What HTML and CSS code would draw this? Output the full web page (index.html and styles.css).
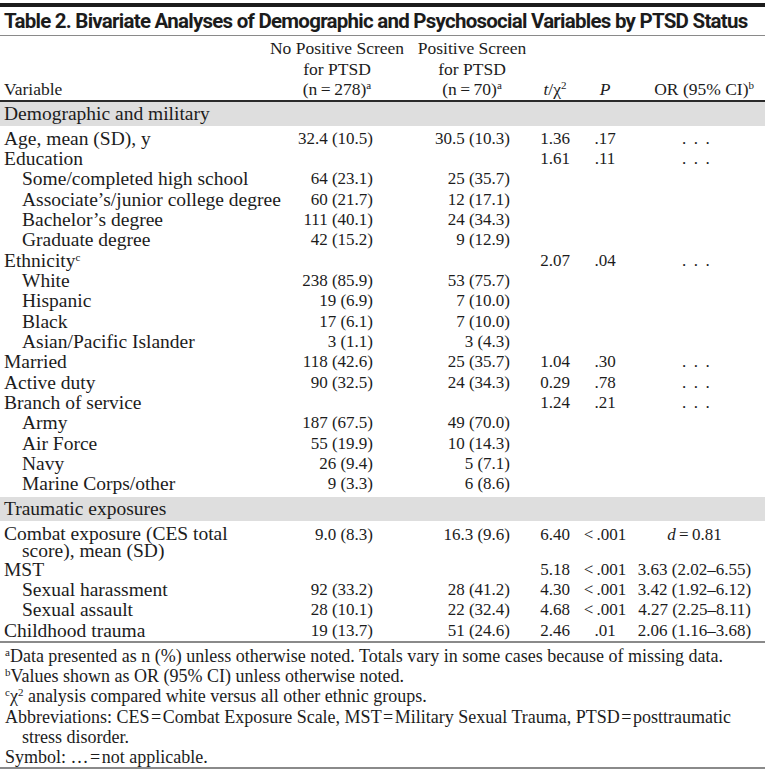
FILE: index.html
```html
<!DOCTYPE html>
<html lang="en">
<head>
<meta charset="utf-8">
<title>Table 2</title>
<link rel="stylesheet" href="styles.css">
</head>
<body>
<div class="page">
  <div class="topbar"></div>
  <h1 class="title">Table 2. Bivariate Analyses of Demographic and Psychosocial Variables by PTSD Status</h1>
  <table class="tbl">
    <colgroup>
      <col class="c-var"><col class="c-neg"><col class="c-pos"><col class="c-t"><col class="c-p"><col class="c-or">
    </colgroup>
    <thead>
      <tr>
        <th class="h-var">Variable</th>
        <th class="h-grp">No Positive Screen<br>for PTSD<br>(n&#8201;=&#8201;278)<sup>a</sup></th>
        <th class="h-grp">Positive Screen<br>for PTSD<br>(n&#8201;=&#8201;70)<sup>a</sup></th>
        <th class="h-t"><i>t</i>/χ<sup>2</sup></th>
        <th class="h-p"><i>P</i></th>
        <th class="h-or">OR (95% CI)<sup>b</sup></th>
      </tr>
    </thead>
    <tbody>
      <tr class="section"><td colspan="6">Demographic and military</td></tr>
      <tr class="first"><td class="lab">Age, mean (SD), y</td><td class="neg">32.4 (10.5)</td><td class="pos">30.5 (10.3)</td><td class="t">1.36</td><td class="p">.17</td><td class="or"><span class="ell">...</span></td></tr>
      <tr><td class="lab">Education</td><td class="neg"></td><td class="pos"></td><td class="t">1.61</td><td class="p">.11</td><td class="or"><span class="ell">...</span></td></tr>
      <tr><td class="lab sub">Some/completed high school</td><td class="neg">64 (23.1)</td><td class="pos">25 (35.7)</td><td class="t"></td><td class="p"></td><td class="or"></td></tr>
      <tr><td class="lab sub">Associate’s/junior college degree</td><td class="neg">60 (21.7)</td><td class="pos">12 (17.1)</td><td class="t"></td><td class="p"></td><td class="or"></td></tr>
      <tr><td class="lab sub">Bachelor’s degree</td><td class="neg">111 (40.1)</td><td class="pos">24 (34.3)</td><td class="t"></td><td class="p"></td><td class="or"></td></tr>
      <tr><td class="lab sub">Graduate degree</td><td class="neg">42 (15.2)</td><td class="pos">9 (12.9)</td><td class="t"></td><td class="p"></td><td class="or"></td></tr>
      <tr><td class="lab">Ethnicity<sup>c</sup></td><td class="neg"></td><td class="pos"></td><td class="t">2.07</td><td class="p">.04</td><td class="or"><span class="ell">...</span></td></tr>
      <tr><td class="lab sub">White</td><td class="neg">238 (85.9)</td><td class="pos">53 (75.7)</td><td class="t"></td><td class="p"></td><td class="or"></td></tr>
      <tr><td class="lab sub">Hispanic</td><td class="neg">19 (6.9)</td><td class="pos">7 (10.0)</td><td class="t"></td><td class="p"></td><td class="or"></td></tr>
      <tr><td class="lab sub">Black</td><td class="neg">17 (6.1)</td><td class="pos">7 (10.0)</td><td class="t"></td><td class="p"></td><td class="or"></td></tr>
      <tr><td class="lab sub">Asian/Pacific Islander</td><td class="neg">3 (1.1)</td><td class="pos">3 (4.3)</td><td class="t"></td><td class="p"></td><td class="or"></td></tr>
      <tr><td class="lab">Married</td><td class="neg">118 (42.6)</td><td class="pos">25 (35.7)</td><td class="t">1.04</td><td class="p">.30</td><td class="or"><span class="ell">...</span></td></tr>
      <tr><td class="lab">Active duty</td><td class="neg">90 (32.5)</td><td class="pos">24 (34.3)</td><td class="t">0.29</td><td class="p">.78</td><td class="or"><span class="ell">...</span></td></tr>
      <tr><td class="lab">Branch of service</td><td class="neg"></td><td class="pos"></td><td class="t">1.24</td><td class="p">.21</td><td class="or"><span class="ell">...</span></td></tr>
      <tr><td class="lab sub">Army</td><td class="neg">187 (67.5)</td><td class="pos">49 (70.0)</td><td class="t"></td><td class="p"></td><td class="or"></td></tr>
      <tr><td class="lab sub">Air Force</td><td class="neg">55 (19.9)</td><td class="pos">10 (14.3)</td><td class="t"></td><td class="p"></td><td class="or"></td></tr>
      <tr><td class="lab sub">Navy</td><td class="neg">26 (9.4)</td><td class="pos">5 (7.1)</td><td class="t"></td><td class="p"></td><td class="or"></td></tr>
      <tr class="last"><td class="lab sub">Marine Corps/other</td><td class="neg">9 (3.3)</td><td class="pos">6 (8.6)</td><td class="t"></td><td class="p"></td><td class="or"></td></tr>
      <tr class="section"><td colspan="6">Traumatic exposures</td></tr>
      <tr class="first-wrap"><td class="lab wrap">Combat exposure (CES total<br>score), mean (SD)</td><td class="neg">9.0 (8.3)</td><td class="pos">16.3 (9.6)</td><td class="t">6.40</td><td class="p">&lt;&#8201;.001</td><td class="or"><i>d</i>&#8201;=&#8201;0.81</td></tr>
      <tr><td class="lab">MST</td><td class="neg"></td><td class="pos"></td><td class="t">5.18</td><td class="p">&lt;&#8201;.001</td><td class="or">3.63 (2.02–6.55)</td></tr>
      <tr><td class="lab sub">Sexual harassment</td><td class="neg">92 (33.2)</td><td class="pos">28 (41.2)</td><td class="t">4.30</td><td class="p">&lt;&#8201;.001</td><td class="or">3.42 (1.92–6.12)</td></tr>
      <tr><td class="lab sub">Sexual assault</td><td class="neg">28 (10.1)</td><td class="pos">22 (32.4)</td><td class="t">4.68</td><td class="p">&lt;&#8201;.001</td><td class="or">4.27 (2.25–8.11)</td></tr>
      <tr class="end"><td class="lab">Childhood trauma</td><td class="neg">19 (13.7)</td><td class="pos">51 (24.6)</td><td class="t">2.46</td><td class="p">.01</td><td class="or">2.06 (1.16–3.68)</td></tr>
    </tbody>
  </table>
  <div class="notes">
    <p><sup>a</sup>Data presented as n (%) unless otherwise noted. Totals vary in some cases because of missing data.</p>
    <p><sup>b</sup>Values shown as OR (95% CI) unless otherwise noted.</p>
    <p><sup>c</sup>χ<sup>2</sup> analysis compared white versus all other ethnic groups.</p>
    <p class="hang">Abbreviations: CES&#8202;=&#8202;Combat Exposure Scale, MST&#8202;=&#8202;Military Sexual Trauma, PTSD&#8202;=&#8202;posttraumatic<br>stress disorder.</p>
    <p>Symbol: …&#8202;=&#8202;not applicable.</p>
  </div>
</div>
</body>
</html>
```

FILE: styles.css
```css
html, body {
  margin: 0;
  padding: 0;
  background: #ffffff;
}

body {
  color: #1c1c1c;
  font-family: "Liberation Serif", "Times New Roman", serif;
}

.page {
  width: 765px;
  padding-top: 3px;
}

.topbar {
  height: 4px;
  background: #1c1c1c;
}

.title {
  margin: 0;
  padding: 3px 0 0 4px;
  height: 25px;
  line-height: 23px;
  font-family: "Roboto", "Liberation Sans", sans-serif;
  font-weight: bold;
  font-size: 20.5px;
  letter-spacing: -0.75px;
  color: #1c1c1c;
  white-space: nowrap;
  border-bottom: 1px solid #8a8a8a;
}

.tbl {
  width: 765px;
  border-collapse: collapse;
  table-layout: fixed;
}

.c-var { width: 262px; }
.c-neg { width: 150px; }
.c-pos { width: 120px; }
.c-t { width: 46px; }
.c-p { width: 54px; }
.c-or { width: 133px; }

.tbl th {
  font-weight: normal;
  font-size: 17.5px;
  line-height: 20.5px;
  vertical-align: bottom;
  padding: 2px 0 0 0;
  border-bottom: 2px solid #2a2a2a;
}

.tbl sup {
  font-size: 11px;
  line-height: 0;
  vertical-align: 6px;
}

.h-var { text-align: left; padding-left: 4px !important; }
.h-grp { text-align: center; }
.h-t { text-align: center; }
.h-p { text-align: center; }
.h-or { text-align: right; padding-right: 11px !important; }

.tbl td {
  padding: 0;
  line-height: 20.35px;
  font-size: 17px;
  vertical-align: top;
  white-space: nowrap;
}

.tbl td.lab {
  font-size: 19.5px;
  padding-left: 4px;
}

.tbl td.sub {
  padding-left: 22px;
}

.tbl td.wrap {
  line-height: 17.5px;
  padding-left: 22px;
  text-indent: -18px;
}

.section td {
  background: #dedede;
  font-size: 19.5px;
  line-height: 24px;
  padding-left: 4px;
}

.first td {
  padding-top: 3px;
}

.first-wrap td {
  padding-top: 4px;
}

.last td {
  padding-bottom: 2px;
}

.end td {
  border-bottom: 2px solid #8a8a8a;
}

.neg { text-align: right; padding-right: 39px !important; }
.pos { text-align: right; padding-right: 22px !important; }
.t { text-align: center; }
.p { text-align: center; }
.or { text-align: center; padding-right: 8px !important; }

.ell {
  letter-spacing: 7.5px;
  margin-left: 10px;
}

.notes {
  padding-top: 3px;
  border-bottom: 2px solid #8a8a8a;
  font-size: 18px;
  line-height: 20.2px;
}

.notes p {
  margin: 0;
  padding-left: 5px;
}

.notes sup {
  font-size: 11px;
  line-height: 0;
  vertical-align: 6px;
}

.notes .hang {
  padding-left: 22px;
  text-indent: -17px;
}
```
